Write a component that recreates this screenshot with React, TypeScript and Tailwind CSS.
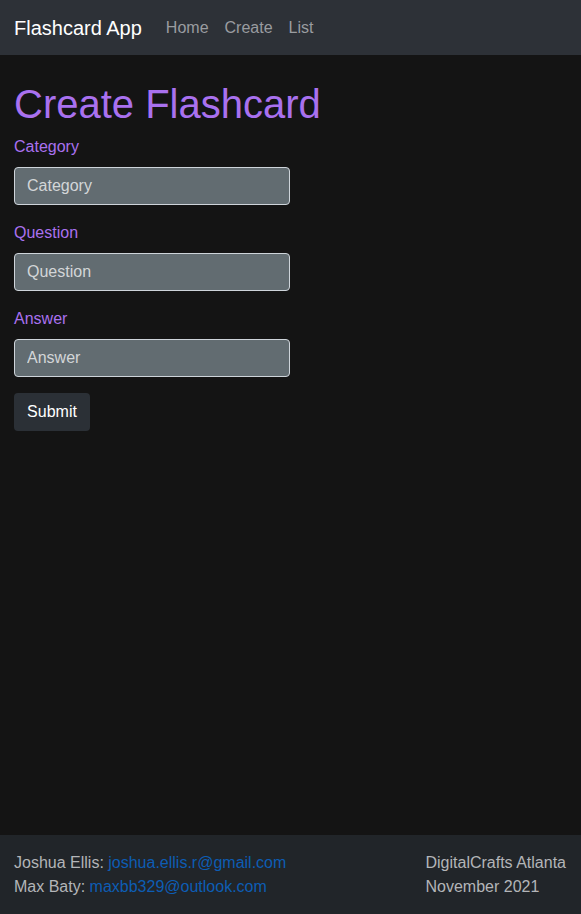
import React from 'react';

const Field: React.FC<{ label: string }> = ({ label }) => (
  <div className="mb-4">
    <label className="mb-2 block text-base leading-6 text-[#a971ef]">{label}</label>
    <input
      type="text"
      placeholder={label}
      className="block h-[38px] w-[276px] rounded-[4px] border border-[#ced4da] bg-[#626c71] px-3 text-base text-white placeholder:text-[#d3d6d8] outline-none"
    />
  </div>
);

export default function App() {
  return (
    <div className="flex min-h-screen flex-col bg-[#141414] font-['Liberation_Sans',Arial,sans-serif]">
      <nav className="flex h-[55px] items-center bg-[#2d3137] px-[14px]">
        <span className="mr-4 text-xl text-white">Flashcard App</span>
        <a className="px-2 text-base text-[#9a9ca0]">Home</a>
        <a className="px-2 text-base text-[#9a9ca0]">Create</a>
        <a className="px-2 text-base text-[#9a9ca0]">List</a>
      </nav>

      <main className="flex-1 px-[14px] pt-[25px]">
        <h1 className="mb-[7px] text-[40px] leading-[48px] text-[#a971ef]">Create Flashcard</h1>
        <Field label="Category" />
        <Field label="Question" />
        <Field label="Answer" />
        <button className="h-[38px] w-[76px] rounded-[4px] bg-[#2b3036] text-base text-white">Submit</button>
      </main>

      <footer className="flex justify-between bg-[#212529] pb-[15px] pl-[14px] pr-[15px] pt-4 text-base leading-6 text-[#b3b5b8]">
        <div>
          <div>
            Joshua Ellis: <a className="text-[#0d5db4]">joshua.ellis.r@gmail.com</a>
          </div>
          <div>
            Max Baty: <a className="text-[#0d5db4]">maxbb329@outlook.com</a>
          </div>
        </div>
        <div>
          <div>DigitalCrafts Atlanta</div>
          <div>November 2021</div>
        </div>
      </footer>
    </div>
  );
}
